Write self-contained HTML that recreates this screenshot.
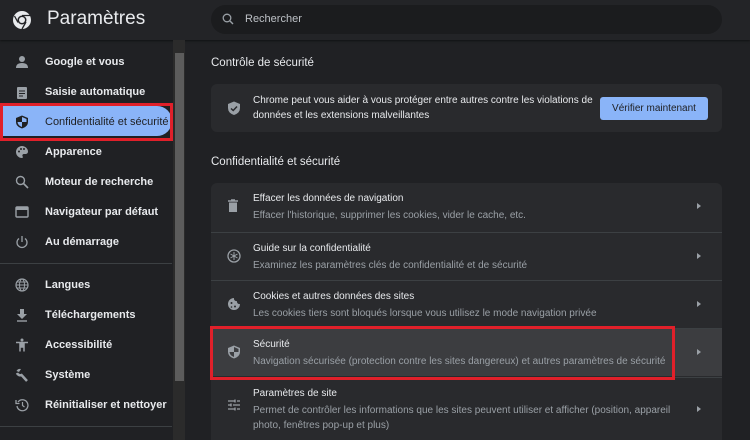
<!DOCTYPE html>
<html style="width:750px;height:440px;overflow:hidden"><head><meta charset="utf-8"><style>
*{margin:0;padding:0;box-sizing:border-box}
body{width:750px;height:440px;overflow:hidden;background:#202124;font-family:"Liberation Sans",sans-serif;color:#e8eaed;position:relative}
.hdr{position:absolute;left:0;top:0;width:750px;height:40px;background:#232427;box-shadow:0 1px 2px rgba(0,0,0,.5)}
.logo{position:absolute;left:12px;top:10px;width:20px;height:20px}
.title{position:absolute;left:47px;top:8px;font-size:19px;color:#e8eaed}
.search{position:absolute;left:211px;top:5px;width:511px;height:29px;background:#1b1c1e;border-radius:15px}
.search span{position:absolute;left:34px;top:8px;font-size:11px;color:#bdc1c6}
.search svg{position:absolute;left:11px;top:8px}
.side{position:absolute;left:0;top:40px;width:172px;height:400px}
.it{position:absolute;left:0;height:30px;width:172px;font-size:11px;font-weight:bold;color:#e8eaed;white-space:nowrap}
.it span{position:absolute;left:45px;top:10px}
.it svg{position:absolute;left:15px;top:9px}
.act{background:#8ab4f8;border-radius:0 18px 18px 0;color:#202124}
.div{position:absolute;left:0;width:172px;height:1px;background:#3c4043}
.sb{position:absolute;left:173px;top:40px;width:12px;height:400px;background:#2b2b2b}
.thumb{position:absolute;left:175px;top:53px;width:9px;height:328px;background:#5c5c5c}
.red{position:absolute;border:3px solid #e0202a}
.h{position:absolute;left:211px;font-size:11.5px;color:#e8eaed}
.card{position:absolute;left:211px;width:511px;background:#292a2d;border-radius:6px;overflow:hidden}
.row{position:absolute;left:0;width:511px;height:48px;border-top:1px solid #3c4043}
.row b{position:absolute;left:42px;top:10px;font-size:10px;font-weight:normal;color:#e8eaed}
.row i{position:absolute;left:42px;top:25px;font-size:10px;font-style:normal;color:#9aa0a6;line-height:15px;width:440px}
.row svg{position:absolute;left:16px;top:16px}
.arr{position:absolute;left:486px;top:20px;width:0;height:0;border-left:4px solid #9aa0a6;border-top:3.5px solid transparent;border-bottom:3.5px solid transparent}
.btn{position:absolute;left:389px;top:13px;width:108px;height:23px;background:#8ab4f8;border-radius:3px;color:#202124;font-size:10px;text-align:center;line-height:23px}
</style></head><body>
<div class="hdr">
<svg class="logo" viewBox="0 0 20 20"><circle cx="10" cy="10" r="9" fill="#e8eaed"/><circle cx="10" cy="10" r="4.5" fill="#232427"/><circle cx="10" cy="10" r="3" fill="#e8eaed"/><path d="M10 5.5 L18 5.5 M6 12.5 L2.5 6 M14 12 L10 19" stroke="#232427" stroke-width="1.3"/></svg>
<div class="title">Paramètres</div>
<div class="search"><svg width="12" height="12" viewBox="0 0 12 12"><circle cx="5" cy="5" r="3.8" fill="none" stroke="#9aa0a6" stroke-width="1.3"/><path d="M8 8 L11 11" stroke="#9aa0a6" stroke-width="1.4"/></svg><span>Rechercher</span></div>
</div>
<div class="side">
<div class="it" style="top:6px"><svg width="14" height="14" viewBox="0 0 14 14"><circle cx="7" cy="4" r="3" fill="#9aa0a6"/><path d="M1 13 Q1 8 7 8 Q13 8 13 13Z" fill="#9aa0a6"/></svg><span>Google et vous</span></div>
<div class="it" style="top:36px"><svg width="14" height="14" viewBox="0 0 14 14"><rect x="2" y="2" width="10" height="12" rx="1" fill="#9aa0a6"/><path d="M4 6h6M4 8.5h6M4 11h4" stroke="#202124"/></svg><span>Saisie automatique</span></div>
<div class="it act" style="top:66px"><svg width="14" height="14" viewBox="0 0 14 14"><path d="M7 0.5 L13 3 V7 Q13 11.5 7 13.5 Q1 11.5 1 7 V3Z" fill="#202124"/><path d="M7 2 L11.5 4 V7 H7Z M7 7 V12 Q2.8 10.5 2.5 7Z" fill="#8ab4f8"/></svg><span style="color:#202124;font-weight:normal;font-size:11px">Confidentialité et sécurité</span></div>
<div class="it" style="top:96px"><svg width="14" height="14" viewBox="0 0 14 14"><path d="M7 1 A6 6 0 1 0 7 13 C8 13 8 12 7.5 11 C7 10 8 9 9 9 H11 A2.5 2.5 0 0 0 13 6.5 C13 3.5 10 1 7 1Z" fill="#9aa0a6"/><circle cx="4" cy="6.5" r="1" fill="#202124"/><circle cx="6" cy="4" r="1" fill="#202124"/><circle cx="9" cy="4" r="1" fill="#202124"/></svg><span>Apparence</span></div>
<div class="it" style="top:126px"><svg width="14" height="14" viewBox="0 0 14 14"><circle cx="5.5" cy="5.5" r="4" fill="none" stroke="#9aa0a6" stroke-width="1.4"/><path d="M8.5 8.5 L13 13" stroke="#9aa0a6" stroke-width="1.6"/></svg><span>Moteur de recherche</span></div>
<div class="it" style="top:156px"><svg width="14" height="14" viewBox="0 0 14 14"><rect x="1" y="2" width="12" height="10" rx="1" fill="none" stroke="#9aa0a6" stroke-width="1.4"/><rect x="1" y="2" width="12" height="3" fill="#9aa0a6"/></svg><span>Navigateur par défaut</span></div>
<div class="it" style="top:186px"><svg width="14" height="14" viewBox="0 0 14 14"><path d="M4 3.5 A5 5 0 1 0 10 3.5" fill="none" stroke="#9aa0a6" stroke-width="1.3"/><path d="M7 1 V7" stroke="#9aa0a6" stroke-width="1.3"/></svg><span>Au démarrage</span></div>
<div class="div" style="top:223px"></div>
<div class="it" style="top:229px"><svg width="14" height="14" viewBox="0 0 14 14"><circle cx="7" cy="7" r="6" fill="none" stroke="#9aa0a6" stroke-width="1.2"/><ellipse cx="7" cy="7" rx="2.5" ry="6" fill="none" stroke="#9aa0a6"/><path d="M1 7h12M2 4h10M2 10h10" stroke="#9aa0a6"/></svg><span>Langues</span></div>
<div class="it" style="top:259px"><svg width="14" height="14" viewBox="0 0 14 14"><path d="M5 1h4v5h3L7 11 2 6h3Z" fill="#9aa0a6"/><path d="M2 13h10" stroke="#9aa0a6" stroke-width="1.4"/></svg><span>Téléchargements</span></div>
<div class="it" style="top:289px"><svg width="14" height="14" viewBox="0 0 14 14"><circle cx="7" cy="2" r="1.5" fill="#9aa0a6"/><path d="M1 4.5h12M5 4.5v9M9 4.5v9M5 5h4v4H5Z" stroke="#9aa0a6" stroke-width="1.5" fill="#9aa0a6"/></svg><span>Accessibilité</span></div>
<div class="it" style="top:319px"><svg width="14" height="14" viewBox="0 0 14 14"><path d="M2 5 A3.5 3.5 0 0 0 6.5 7 L12 13" stroke="#9aa0a6" stroke-width="2.5" fill="none"/><path d="M1.5 3 A4 4 0 0 1 6 1 L4 4Z" fill="#9aa0a6"/></svg><span>Système</span></div>
<div class="it" style="top:349px"><svg width="14" height="14" viewBox="0 0 14 14"><path d="M3 4 A5.5 5.5 0 1 1 2 8" fill="none" stroke="#9aa0a6" stroke-width="1.3"/><path d="M1 2 V5.5 H4.5" fill="none" stroke="#9aa0a6" stroke-width="1.3"/><path d="M7.5 4v3.5l2 1.5" fill="none" stroke="#9aa0a6" stroke-width="1.2"/></svg><span>Réinitialiser et nettoyer</span></div>
<div class="div" style="top:386px"></div>
</div>
<div class="sb"></div><div class="thumb"></div>
<div class="red" style="left:0;top:103px;width:173px;height:38px"></div>

<div class="h" style="top:57px">Contrôle de sécurité</div>
<div class="card" style="top:84px;height:48px">
<svg style="position:absolute;left:16px;top:17px" width="14" height="15" viewBox="0 0 14 15"><path d="M7 0.5 L13 3 V7 Q13 12 7 14 Q1 12 1 7 V3Z" fill="#9aa0a6"/><path d="M4 7.5 L6.2 9.5 L10 5.5" stroke="#292a2d" stroke-width="1.5" fill="none"/></svg>
<div style="position:absolute;left:42px;top:9px;font-size:10px;line-height:15px;color:#e8eaed;width:340px">Chrome peut vous aider à vous protéger entre autres contre les violations de données et les extensions malveillantes</div>
<div class="btn">Vérifier maintenant</div>
</div>
<div class="h" style="top:156px">Confidentialité et sécurité</div>
<div class="card" style="top:183px;height:257px;border-radius:6px 6px 0 0">
<div class="row" style="top:0;border-top:none"><svg width="12" height="14" viewBox="0 0 12 14"><path d="M1 2h10M4 1h4" stroke="#9aa0a6" stroke-width="1.5"/><path d="M2 3.5h8V13H2Z" fill="#9aa0a6"/></svg><b>Effacer les données de navigation</b><i>Effacer l'historique, supprimer les cookies, vider le cache, etc.</i><div class="arr"></div></div>
<div class="row" style="top:49px"><svg width="14" height="14" viewBox="0 0 14 14"><circle cx="7" cy="7" r="6" fill="none" stroke="#9aa0a6" stroke-width="1.3"/><path d="M7 3v8M3.5 5l7 4M3.5 9l7-4" stroke="#9aa0a6"/></svg><b>Guide sur la confidentialité</b><i>Examinez les paramètres clés de confidentialité et de sécurité</i><div class="arr"></div></div>
<div class="row" style="top:97px"><svg width="14" height="14" viewBox="0 0 14 14"><path d="M7 1 A6 6 0 1 0 13 7 A2.5 2.5 0 0 1 10 4 A2.5 2.5 0 0 1 7 1Z" fill="#9aa0a6"/><circle cx="4.5" cy="6" r="1" fill="#292a2d"/><circle cx="8" cy="9.5" r="1" fill="#292a2d"/><circle cx="4.5" cy="10" r=".8" fill="#292a2d"/></svg><b>Cookies et autres données des sites</b><i>Les cookies tiers sont bloqués lorsque vous utilisez le mode navigation privée</i><div class="arr"></div></div>
<div class="row" style="top:145px;background:#3c3d40"><svg width="14" height="14" viewBox="0 0 14 14"><path d="M7 0.5 L13 3 V7 Q13 11.5 7 13.5 Q1 11.5 1 7 V3Z" fill="#9aa0a6"/><path d="M7 2 L11.5 4 V7 H7Z M7 7 V12 Q2.8 10.5 2.5 7Z" fill="#3c3d40"/></svg><b>Sécurité</b><i>Navigation sécurisée (protection contre les sites dangereux) et autres paramètres de sécurité</i><div class="arr"></div></div>
<div class="row" style="top:194px;height:70px"><svg style="top:20px" width="14" height="14" viewBox="0 0 14 14"><path d="M1 3h7M10 3h3M1 7h3M6 7h7M1 11h7M10 11h3M8 1.5v3M4 5.5v3M8 9.5v3" stroke="#9aa0a6" stroke-width="1.3"/></svg><b>Paramètres de site</b><i>Permet de contrôler les informations que les sites peuvent utiliser et afficher (position, appareil photo, fenêtres pop-up et plus)</i><div class="arr" style="top:28px"></div></div>
</div>
<div class="red" style="left:210px;top:326px;width:465px;height:54px"></div>
</body></html>
